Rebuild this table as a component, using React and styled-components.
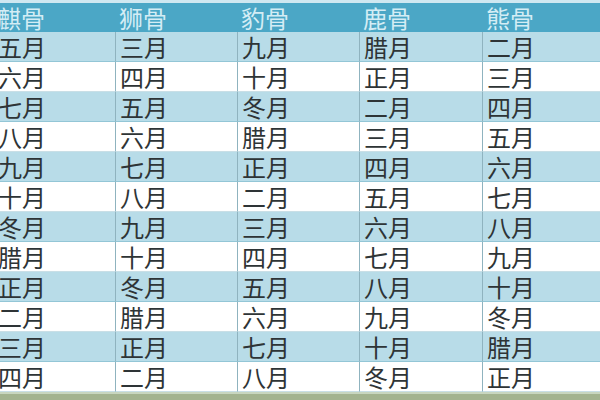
import React from "react";
import styled, { createGlobalStyle } from "styled-components";

const Global = createGlobalStyle`
  html, body { margin: 0; padding: 0; background: #fff; overflow: hidden; }
  body { font-family: "Noto Sans CJK SC", "Noto Sans", sans-serif; }
`;

const Page = styled.div`
  width: 600px;
  height: 400px;
  overflow: hidden;
  display: flex;
  flex-direction: column;
  background: #fff;
`;

const Table = styled.div`
  display: grid;
  grid-template-columns: 122px 122px 122px 123px 123px;
  margin-left: -7px;
  width: 612px;
`;

const HeadCell = styled.div`
  height: 29px;
  border-top: 3px solid #cfe8f1;
  background: #4ba7c6;
  color: #d4edf5;
  font-size: 24px;
  line-height: 29px;
  padding-left: 4px;
  white-space: nowrap;
`;

const Cell = styled.div`
  height: 29px;
  border-bottom: 1px solid ${(p) => (p.$shade ? "#93c6d6" : "#c9dfe6")};
  border-left: 1px solid #8fb3bf;
  background: ${(p) => (p.$shade ? "#b8dce8" : "#ffffff")};
  color: #2e3436;
  font-size: 24px;
  line-height: 29px;
  padding-left: 4px;
  white-space: nowrap;
`;

const Footer = styled.div`
  flex: 1;
  border-top: 2px solid #c8d6bf;
  background: #a3b38f;
`;

const headers = ["麒骨", "狮骨", "豹骨", "鹿骨", "熊骨"];
const months = ["正", "二", "三", "四", "五", "六", "七", "八", "九", "十", "冬", "腊"];
const starts = [4, 2, 8, 11, 1];

export default function App() {
  const rows = Array.from({ length: 12 }, (_, r) =>
    starts.map((s) => months[(s + r) % 12] + "月")
  );
  return (
    <Page>
      <Global />
      <Table>
        {headers.map((h) => (
          <HeadCell key={h}>{h}</HeadCell>
        ))}
        {rows.map((row, r) =>
          row.map((m, c) => (
            <Cell key={`${r}-${c}`} $shade={r % 2 === 0}>
              {m}
            </Cell>
          ))
        )}
      </Table>
      <Footer />
    </Page>
  );
}
